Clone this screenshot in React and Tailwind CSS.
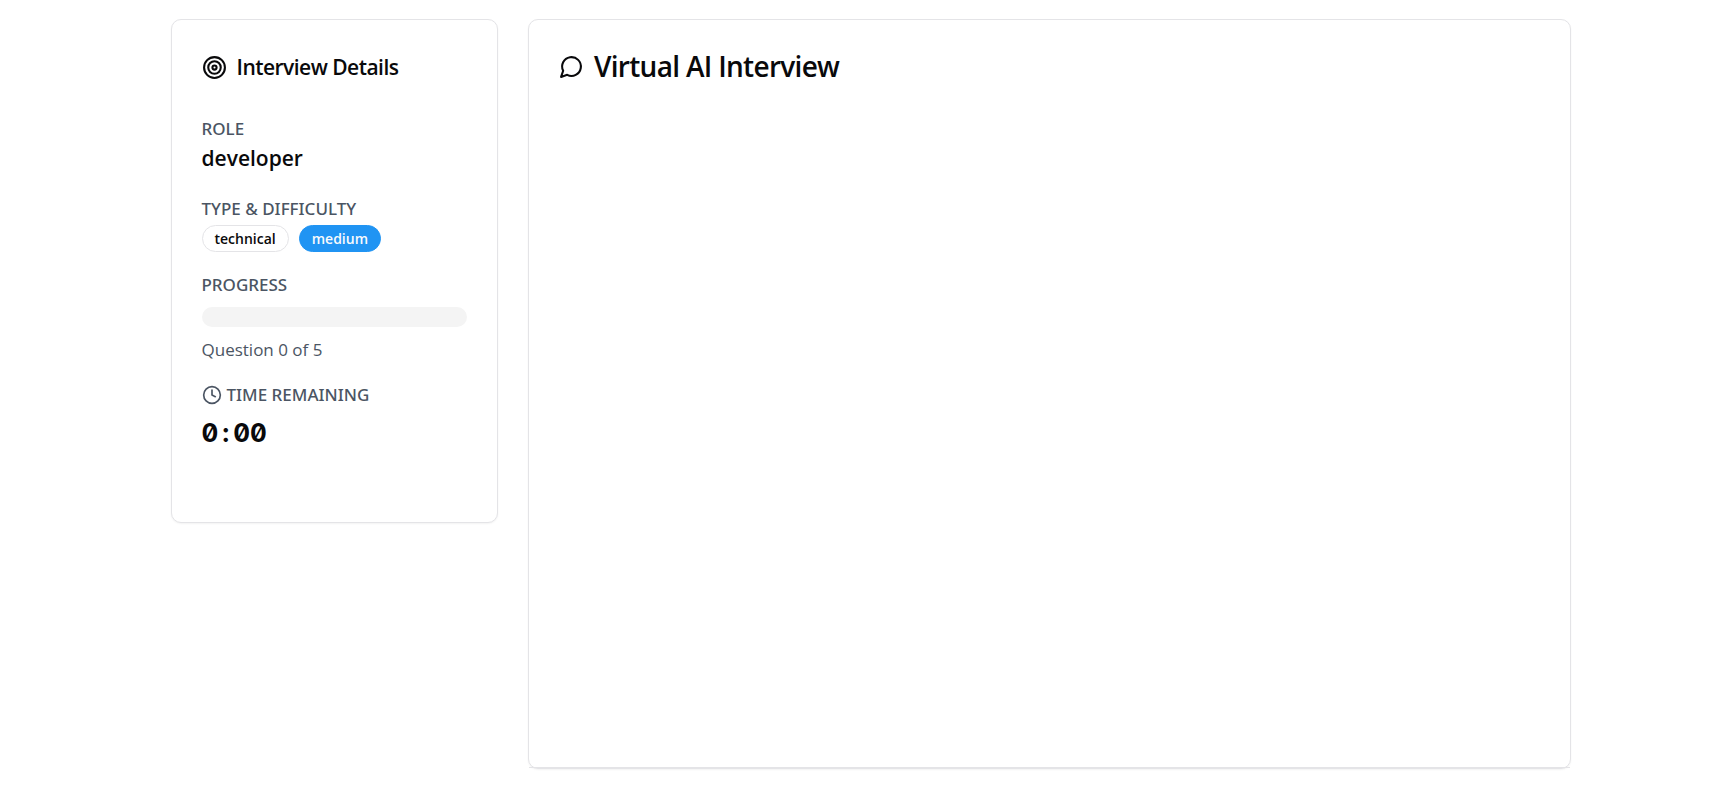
import { Clock } from "lucide-react";

function TargetIcon() {
  return (
    <svg
      aria-hidden="true"
      viewBox="0 0 24 24"
      className="size-[25px] shrink-0"
      fill="none"
      stroke="currentColor"
      strokeWidth="2"
    >
      <circle cx="12" cy="12" r="10" />
      <circle cx="12" cy="12" r="6" />
      <circle cx="12" cy="12" r="2" />
    </svg>
  );
}

function ChatIcon() {
  return (
    <svg
      aria-hidden="true"
      viewBox="0 0 24 24"
      className="size-[25px] shrink-0"
      fill="none"
      stroke="currentColor"
      strokeWidth="2"
      strokeLinecap="round"
      strokeLinejoin="round"
    >
      <path d="M7.9 20A9 9 0 1 0 4 16.1L2 22Z" />
    </svg>
  );
}

const card = "rounded-[10px] border border-[#e4e4e7] bg-white shadow-xs";
const label = "font-['Noto_Sans',sans-serif] text-[17px] leading-[25px] font-medium text-[#4b5563]";

function InterviewDetails() {
  return (
    <aside className={`${card} px-[30px] pt-8 pb-[69px]`}>
      <h2 className="flex items-center gap-[10px] text-[21px] leading-[30px] font-semibold tracking-tight">
        <TargetIcon />
        Interview Details
      </h2>

      <dl className="mt-[34px] flex flex-col gap-5">
        <div>
          <dt className={label}>ROLE</dt>
          <dd className="text-[21px] leading-[35px] font-semibold">developer</dd>
        </div>
        <div>
          <dt className={label}>TYPE &amp; DIFFICULTY</dt>
          <dd className="mt-1 flex gap-[10px]">
            <span className="rounded-full border border-[#e4e4e7] px-3 text-[14px] leading-[25px] font-semibold">
              technical
            </span>
            <span className="rounded-full border border-[#2094f3] bg-[#2094f3] px-3 text-[14px] leading-[25px] font-semibold text-[#f8fafc]">
              medium
            </span>
          </dd>
        </div>
        <div>
          <dt className={label}>PROGRESS</dt>
          <dd className="mt-[10px]">
            <div
              role="progressbar"
              aria-label="Interview progress"
              aria-valuemin={0}
              aria-valuemax={5}
              aria-valuenow={0}
              className="h-5 rounded-full bg-[#f4f4f4]"
            />
            <p className="mt-[10px] text-[17px] leading-[25px] text-[#4b5563]">
              Question 0 of 5
            </p>
          </dd>
        </div>
        <div>
          <dt className={`${label} flex items-center gap-[5px]`}>
            <Clock aria-hidden="true" className="size-5" strokeWidth={2} />
            TIME REMAINING
          </dt>
          <dd className="mt-[6px] font-['Inter',sans-serif] text-[26px] leading-[40px] font-bold tabular-nums slashed-zero">
            0<span className="px-1">:</span>00
          </dd>
        </div>
      </dl>
    </aside>
  );
}

export default function App() {
  return (
    <div className="min-h-screen bg-white py-[19px] pl-4 font-['Open_Sans','Noto_Sans',sans-serif] text-[#09090b]">
      <main className="mx-auto grid max-w-[1400px] grid-cols-4 items-start gap-[30px]">
        <InterviewDetails />
        <section className={`${card} col-span-3 flex h-[calc(100vh-39px)] flex-col`}>
          <h1 className="flex items-center gap-[10px] px-[30px] py-[29px] text-[28px] leading-[35px] font-semibold tracking-tight">
            <ChatIcon />
            Virtual AI Interview
          </h1>
          <div className="flex-1" />
          <div className="border-t border-[#e4e4e7]" />
        </section>
      </main>
    </div>
  );
}
